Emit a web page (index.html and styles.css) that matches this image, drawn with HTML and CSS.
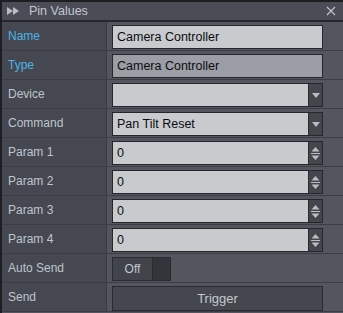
FILE: index.html
```html
<!DOCTYPE html>
<html>
<head>
<meta charset="utf-8">
<link rel="stylesheet" href="styles.css">
</head>
<body>
<div class="window">
  <div class="titlebar">
    <svg class="ticon" width="12" height="8" viewBox="0 0 12 8"><path d="M0 0 L6 4 L0 8 Z M6 0 L12 4 L6 8 Z" fill="#b9bcc4"/></svg>
    <span class="title">Pin Values</span>
    <svg class="close" width="10" height="10" viewBox="0 0 10 10"><path d="M1 1 L9 9 M9 1 L1 9" stroke="#c3c6cd" stroke-width="1.1"/></svg>
  </div>
  <div class="rows">
    <div class="row"><div class="label blue">Name</div><div class="cell"><div class="field">Camera Controller</div></div></div>
    <div class="row"><div class="label blue">Type</div><div class="cell"><div class="field disabled">Camera Controller</div></div></div>
    <div class="row"><div class="label">Device</div><div class="cell"><div class="field combo"><span class="val"></span><span class="btn"><svg width="8" height="5" viewBox="0 0 8 5"><path d="M0 0 H8 L4 5 Z" fill="#b9bcc4"/></svg></span></div></div></div>
    <div class="row"><div class="label">Command</div><div class="cell"><div class="field combo"><span class="val">Pan Tilt Reset</span><span class="btn"><svg width="8" height="5" viewBox="0 0 8 5"><path d="M0 0 H8 L4 5 Z" fill="#b9bcc4"/></svg></span></div></div></div>
    <div class="row"><div class="label">Param 1</div><div class="cell"><div class="field combo"><span class="val">0</span><span class="btn"><svg width="9" height="15" viewBox="0 0 9 15"><path d="M4.5 1 L8.5 5.5 H0.5 Z M4.5 14 L8.5 9.5 H0.5 Z" fill="#b9bcc4"/><rect x="0" y="7" width="9" height="1" fill="#b9bcc4"/></svg></span></div></div></div>
    <div class="row"><div class="label">Param 2</div><div class="cell"><div class="field combo"><span class="val">0</span><span class="btn"><svg width="9" height="15" viewBox="0 0 9 15"><path d="M4.5 1 L8.5 5.5 H0.5 Z M4.5 14 L8.5 9.5 H0.5 Z" fill="#b9bcc4"/><rect x="0" y="7" width="9" height="1" fill="#b9bcc4"/></svg></span></div></div></div>
    <div class="row"><div class="label">Param 3</div><div class="cell"><div class="field combo"><span class="val">0</span><span class="btn"><svg width="9" height="15" viewBox="0 0 9 15"><path d="M4.5 1 L8.5 5.5 H0.5 Z M4.5 14 L8.5 9.5 H0.5 Z" fill="#b9bcc4"/><rect x="0" y="7" width="9" height="1" fill="#b9bcc4"/></svg></span></div></div></div>
    <div class="row"><div class="label">Param 4</div><div class="cell"><div class="field combo"><span class="val">0</span><span class="btn"><svg width="9" height="15" viewBox="0 0 9 15"><path d="M4.5 1 L8.5 5.5 H0.5 Z M4.5 14 L8.5 9.5 H0.5 Z" fill="#b9bcc4"/><rect x="0" y="7" width="9" height="1" fill="#b9bcc4"/></svg></span></div></div></div>
    <div class="row"><div class="label">Auto Send</div><div class="cell"><div class="toggle"><span class="off">Off</span><span class="knob"></span></div></div></div>
    <div class="row last"><div class="label">Send</div><div class="cell"><div class="button">Trigger</div></div></div>
  </div>
</div>
</body>
</html>
```
FILE: styles.css
```css
html, body {
  margin: 0;
  padding: 0;
  background: #53565f;
}
body {
  font-family: "Liberation Sans", Arial, sans-serif;
  font-size: 12px;
}
.window {
  width: 343px;
  height: 313px;
  box-sizing: border-box;
  border-top: 2px solid #1d1e22;
  border-left: 2px solid #1d1e22;
  background: #53565f;
  overflow: hidden;
}
.titlebar {
  height: 18px;
  background: #4a4d56;
  border-bottom: 2px solid #26272c;
  display: flex;
  align-items: center;
  padding-left: 5px;
  padding-right: 7px;
}
.ticon {
  display: block;
  margin-right: 10px;
}
.title {
  color: #c3c7cf;
  flex: 1;
  font-size: 12.5px;
}
.close {
  display: block;
}
.rows {
  display: flex;
  flex-direction: column;
}
.row {
  display: grid;
  grid-template-columns: 105px 1fr;
  height: 29px;
  box-sizing: border-box;
  border-bottom: 1px solid #3b3d43;
}
.label {
  background: #454850;
  border-right: 1px solid #393b41;
  color: #bfc5cf;
  padding-left: 6px;
  display: flex;
  align-items: center;
}
.label.blue {
  color: #4eb2e6;
}
.cell {
  padding: 3px 20px 0 5px;
  background: #53565f;
}
.field {
  height: 24px;
  box-sizing: border-box;
  border: 1px solid #26272b;
  background: #c8cace;
  color: #0c0c10;
  display: flex;
  align-items: center;
  padding-left: 4px;
  font-size: 12.5px;
}
.field.disabled {
  background: #9b9ea5;
}
.field.combo {
  padding-left: 0;
}
.val {
  flex: 1;
  padding-left: 4px;
}
.btn {
  width: 13px;
  height: 22px;
  background: #43464d;
  border-left: 1px solid #2a2b30;
  display: flex;
  align-items: center;
  justify-content: center;
}
.btn svg {
  display: block;
}
.toggle {
  width: 59px;
  height: 24px;
  box-sizing: border-box;
  border: 1px solid #2a2b30;
  display: flex;
  background: #33353a;
}
.off {
  width: 39px;
  background: #41444b;
  color: #c3c7cf;
  display: flex;
  align-items: center;
  justify-content: center;
  border-right: 1px solid #2a2b30;
}
.knob {
  flex: 1;
}
.button {
  height: 25px;
  box-sizing: border-box;
  border: 1px solid #2a2b30;
  background: #44474e;
  color: #c3c7cf;
  display: flex;
  align-items: center;
  justify-content: center;
  font-size: 13px;
}
```
